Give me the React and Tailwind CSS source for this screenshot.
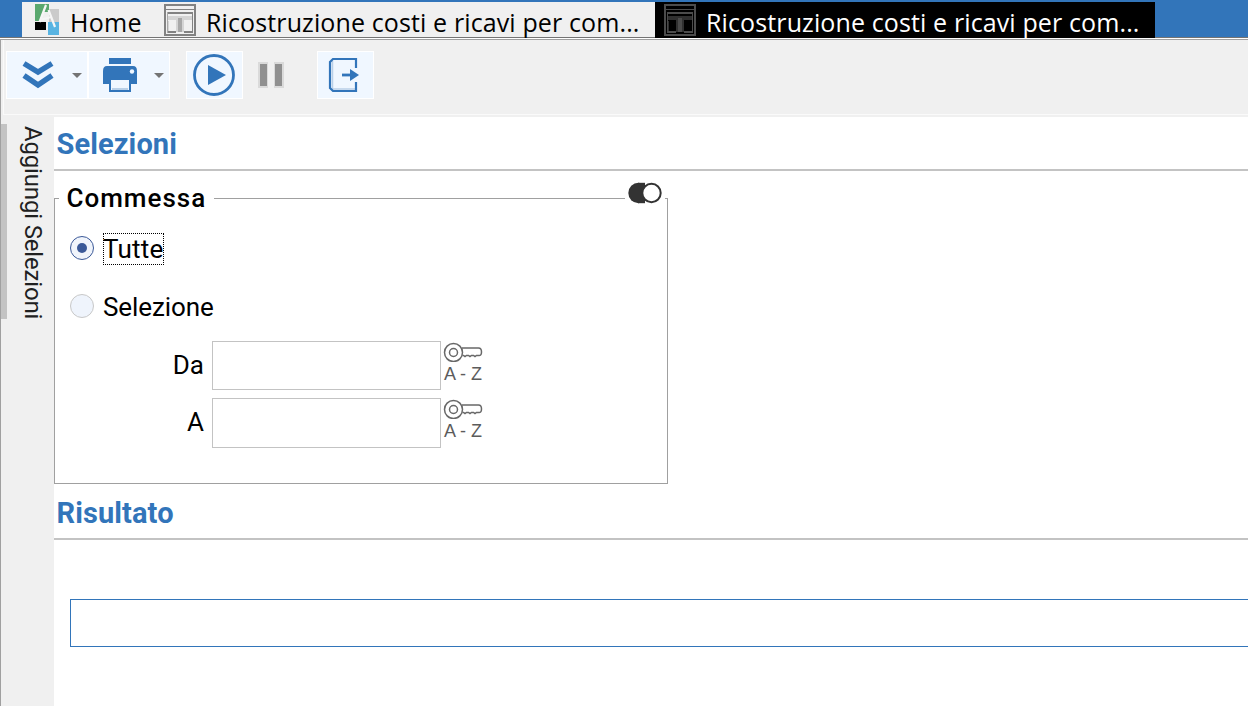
import React from "react";

function FormIcon({ dark }) {
  const line = dark ? "#4c4c4c" : "#828282";
  const soft = dark ? "#303030" : "#d4d4d4";
  const mid = dark ? "#4a4a4a" : "#a8a8a8";
  return (
    <svg width="32" height="32" viewBox="0 0 32 32" shapeRendering="crispEdges" className="shrink-0">
      <rect x="1" y="1" width="30" height="30" fill="none" stroke={line} strokeWidth="2" />
      <rect x="2" y="5" width="28" height="1" fill={line} />
      <rect x="3" y="8" width="26" height="2" fill={line} />
      <rect x="3" y="8" width="1" height="21" fill={mid} />
      <rect x="28" y="8" width="1" height="21" fill={line} />
      <rect x="4" y="12" width="24" height="4" fill={soft} />
      <rect x="4" y="17" width="1" height="11" fill={soft} />
      <rect x="12" y="16" width="8" height="12" fill={soft} />
      <rect x="14" y="14" width="4" height="14" fill={mid} />
      <rect x="4" y="27" width="8" height="2" fill={line} />
      <rect x="20" y="27" width="8" height="2" fill={line} />
    </svg>
  );
}

function HomeLogo() {
  return (
    <svg width="24" height="31" viewBox="0 0 24 31" className="shrink-0">
      <path d="M0 0h11L5 17H0z" fill="#5aa86e" />
      <path d="M11 0h3v8H9z" fill="#5aa86e" />
      <path d="M14 5h10v13H14z" fill="#cbcbcb" />
      <rect x="0" y="18" width="11" height="8" fill="#000" />
      <path d="M13 18h11v13H13z" fill="#59b4e2" />
      <path d="M4.500 18 11 1M7 15.500 16 13M13.500 6 20 23" fill="none" stroke="#f6f6f6" strokeWidth="2.200" />
    </svg>
  );
}

function Caret() {
  return (
    <svg width="10" height="5" viewBox="0 0 10 5">
      <path d="M0 0h10L5 5z" fill="#747474" />
    </svg>
  );
}

function KeyIcon() {
  return (
    <svg width="40" height="20" viewBox="0 0 40 20" fill="none" stroke="#686868" strokeWidth="1.5">
      <circle cx="10.500" cy="10.500" r="9" />
      <circle cx="10.500" cy="10.500" r="4" />
      <path d="M19 6H35.500q3 0 3 4t-3 3.500h-2l-1.500 1-1.500-1h-2l-1.500 1-1.500-1h-2l-1.500 1-1.500-1H19.500" />
    </svg>
  );
}

function RangeField({ label }) {
  return (
    <div className="flex">
      <label className="w-[149px] text-right leading-[48px]">{label}</label>
      <div className="ml-2 h-full w-[229px] border border-[#c3c3c3] bg-white" />
      <div className="ml-[2px] mt-px flex w-10 flex-col">
        <KeyIcon />
        <span className="w-12 whitespace-nowrap pl-px font-['Liberation_Sans',sans-serif] text-[18px] leading-[24px] text-[#5c5c5c]">A - Z</span>
      </div>
    </div>
  );
}

function SectionTitle({ children }) {
  return (
    <h2 className="h-[54px] border-b-2 border-[#c3c3c3] pl-[2.5px] text-[29px] font-bold leading-[54px] tracking-[0.1px] text-[#3275ba]">
      {children}
    </h2>
  );
}

export default function App() {
  return (
    <div className="flex h-[706px] w-[1248px] flex-col overflow-hidden bg-[#f0f0f0] font-[Roboto,sans-serif] text-[26px] text-black">
      <header className="flex h-[38px] shrink-0 border-b border-[#747474] bg-[#3275ba] pl-[22px] pt-[2px] font-['Open_Sans',sans-serif] text-[25px] leading-[41px]">
        <div className="flex h-[35px] w-[633px] bg-[#f0f0f0] pl-[13px] pt-[2px]">
          <HomeLogo />
          <span className="-mt-[2px] ml-[11px] w-[94px] whitespace-nowrap tracking-[0.3px]">Home</span>
          <FormIcon />
          <span className="-mt-[2px] ml-[10px] whitespace-nowrap tracking-[0.12px]">Ricostruzione costi e ricavi per com...</span>
        </div>
        <div className="flex h-[36px] w-[500px] bg-black pl-[9px] pt-[2px] text-white">
          <FormIcon dark />
          <span className="-mt-[2px] ml-[10px] whitespace-nowrap tracking-[0.12px]">Ricostruzione costi e ricavi per com...</span>
        </div>
      </header>
      <div className="h-px shrink-0 bg-white" />
      <div className="flex min-h-0 flex-1 flex-col border-l border-t border-[#a0a0a0]">
        <div className="ml-[2px] flex h-[75px] shrink-0 border-b border-l border-[#fafafa] pl-[2px] pt-[11px]">
          <div className="flex h-12 w-[82px] items-center border border-white bg-[#f0f7ff] pl-[15px]">
            <svg width="32" height="28" viewBox="0 0 32 28" fill="none" stroke="#3275ba" strokeWidth="5.500">
              <path d="M2 2.500 16 11 30 2.500M2 14.500 16 24 30 14.500" />
            </svg>
            <span className="ml-[18px] flex"><Caret /></span>
          </div>
          <div className="flex h-12 w-[82px] items-center border border-white bg-[#f0f7ff] pl-[13px]">
            <svg width="36" height="36" viewBox="0 0 36 36">
              <path d="M7 1h22v6H7z" fill="#3275ba" />
              <path d="M5 9h26q4 0 4 5v13H1V14q0-5 4-5z" fill="#3275ba" />
              <circle cx="30" cy="14.500" r="2.200" fill="#f0f7ff" />
              <path d="M8 22h20v12H8z" fill="#f0f7ff" stroke="#3275ba" strokeWidth="2" />
              <path d="M10 32h16" stroke="#b9d0e8" strokeWidth="2" />
            </svg>
            <span className="ml-4 flex"><Caret /></span>
          </div>
          <div className="ml-4 flex h-12 w-[57px] items-center border border-white bg-[#f0f7ff] pl-[6px]">
            <svg width="42" height="42" viewBox="0 0 42 42">
              <circle cx="21" cy="21" r="19.500" fill="none" stroke="#3275ba" strokeWidth="2.800" />
              <path d="M15 11 33 21 15 31z" fill="#3275ba" />
            </svg>
          </div>
          <div className="flex h-12 w-[74px] pl-[15px] pt-[11px]">
            <svg width="26" height="26" viewBox="0 0 26 26">
              <path d="M0 0h10v26H0zM16 0h10v26H16z" fill="#dadada" />
              <path d="M2 2h7v22H2zM17 2h7v22H17z" fill="#909090" />
            </svg>
          </div>
          <div className="flex h-12 w-[57px] items-center border border-white bg-[#f0f7ff] pl-[10px]">
            <svg width="32" height="36" viewBox="0 0 32 36" fill="none">
              <path d="M4.500 4v28h23" stroke="#b9d0e8" strokeWidth="1.500" />
              <path d="M28 11V2H5L2 5v26l3 3h23v-9" stroke="#3275ba" strokeWidth="2.200" />
              <path d="M14 18h12" stroke="#3275ba" strokeWidth="2.800" />
              <path d="M22 12 31 18 22 24z" fill="#3275ba" />
            </svg>
          </div>
        </div>
        <div className="flex min-h-0 flex-1">
          <aside className="flex w-[53px] shrink-0 pt-[9px]">
            <div className="h-[195px] w-[6px] bg-[#c3c3c3]" />
            <div className="ml-[11px] mt-[2px] whitespace-nowrap text-[24px] leading-[30px] tracking-[-0.17px] text-[#202020] [writing-mode:vertical-rl]">Aggiungi Selezioni</div>
          </aside>
          <main className="mt-[2px] min-w-0 flex-1 bg-white">
            <SectionTitle>Selezioni</SectionTitle>
            <div className="relative mt-[27px] h-[286px] w-[614px] border border-[#a0a0a0]">
              <div className="absolute -top-[17px] left-1 w-[155px] whitespace-nowrap bg-white pl-[7.5px] text-[26px] font-medium leading-[32px] tracking-[1px]">Commessa</div>
              <div className="absolute -top-[18px] left-[570px] flex w-10 bg-white pl-px">
                <svg width="37" height="24" viewBox="0 0 37 24">
                  <circle cx="12.500" cy="12" r="10.200" fill="#333" />
                  <path d="M12 1.800h7v20.400h-7z" fill="#333" />
                  <circle cx="25.500" cy="12" r="9.200" fill="#fff" stroke="#333" strokeWidth="2" />
                </svg>
              </div>
              <div className="mt-[34px] flex h-[32px] items-center pl-[15px]">
                <div className="-mt-[2px] flex h-6 w-6 items-center justify-center rounded-full border border-[#3b5998] bg-[#f0f4fb]">
                  <div className="h-[10px] w-[10px] rounded-full bg-[#3b5998]" />
                </div>
                <span className="ml-[9px] h-[32px] w-[61px] whitespace-nowrap leading-[33px] tracking-[0.2px] outline-1 -outline-offset-1 outline-dotted outline-black">Tutte</span>
              </div>
              <div className="mt-[26px] flex h-[32px] items-center pl-[15px]">
                <div className="-mt-[2px] h-6 w-6 rounded-full border border-[#c8c8c8] bg-[#eff4fc]" />
                <span className="ml-[9px] leading-[34px] tracking-[-0.1px]">Selezione</span>
              </div>
              <div className="mt-[18px] grid grid-rows-[49px_50px] gap-2">
                <RangeField label="Da" />
                <RangeField label="A" />
              </div>
            </div>
            <div className="mt-[2px]">
              <SectionTitle>Risultato</SectionTitle>
            </div>
            <div className="ml-4 mt-[59px] h-12 border border-r-0 border-[#3275ba]" />
          </main>
        </div>
      </div>
    </div>
  );
}
